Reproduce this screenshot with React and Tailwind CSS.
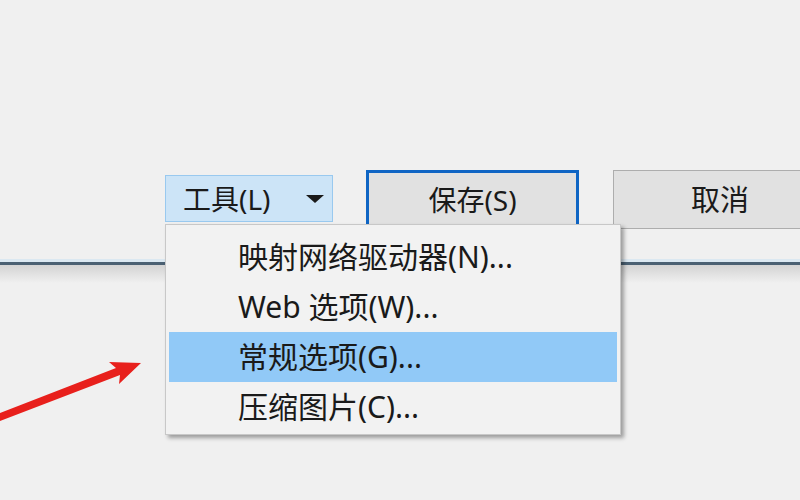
export default function App() {
  const items = [
    { label: "映射网络驱动器(N)...", active: false },
    { label: "Web 选项(W)...", active: false },
    { label: "常规选项(G)...", active: true },
    { label: "压缩图片(C)...", active: false },
  ];
  return (
    <div className="relative w-[800px] h-[500px] overflow-hidden bg-[#f0f0f0] flex flex-col text-[#1a1a1a] font-['Noto_Sans','Noto_Sans_CJK_SC',sans-serif]">
      <div className="h-[259px] shrink-0 flex items-start pt-[170px]">
        <div className="ml-[165px] mt-[5px] shrink-0 w-[168px] h-[47px] border border-[#99c9ef] bg-[#cce4f7] flex items-center pl-[17px] pr-[8px] text-[28px] leading-none">
          <span>工具(L)</span>
          <svg className="ml-auto" width="18" height="10" viewBox="0 0 18 10">
            <polygon points="0,1 18,1 9,9" fill="#1a1a1a" />
          </svg>
        </div>
        <div className="ml-[33px] shrink-0 w-[213px] h-[59px] border-[3px] border-[#0f65c4] bg-[#e1e1e1] flex items-center justify-center text-[28px] leading-none">
          保存(S)
        </div>
        <div className="ml-[34px] shrink-0 w-[214px] h-[59px] border border-[#adadad] bg-[#e1e1e1] flex items-center justify-center text-[29px] leading-none">
          取消
        </div>
      </div>
      <div className="h-[3px] shrink-0 bg-[#dbe8f1]" />
      <div className="h-[3px] shrink-0 bg-[#4a6072]" />
      <div className="h-[18px] shrink-0 bg-gradient-to-b from-[#d3d3d3] to-[#f0f0f0]" />
      <div className="flex-1" />

      <div className="absolute left-[165px] top-[224px] w-[456px] border border-[#c8c8c8] bg-[#f2f2f2] shadow-[3px_3px_4px_rgba(0,0,0,0.35)] pt-[7px] pb-[2px] px-[3px]">
        {items.map((it) => (
          <div
            key={it.label}
            className={
              it.active
                ? "h-[50px] flex items-center pl-[69px] text-[30px] leading-none bg-[#91c9f7]"
                : "h-[50px] flex items-center pl-[69px] text-[30px] leading-none"
            }
          >
            {it.label}
          </div>
        ))}
      </div>

      <svg className="absolute left-0 top-[355px]" width="150" height="75" viewBox="0 355 150 75">
        <polygon
          points="0,413 116,368 109,362 141,363 119,384 120,375 0,421"
          fill="#e8201c"
        />
      </svg>
    </div>
  );
}
